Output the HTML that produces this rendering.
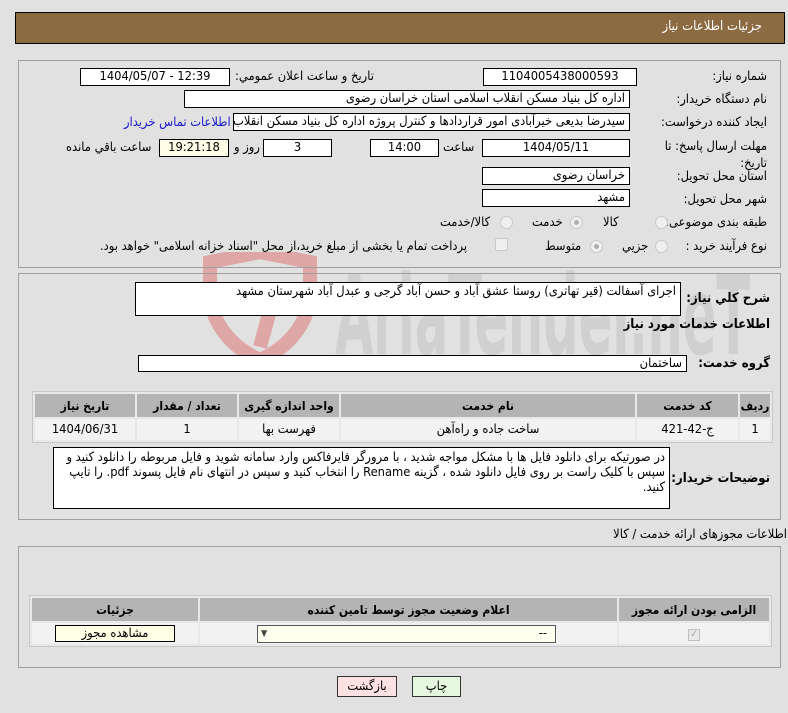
<!DOCTYPE html>
<html><head><meta charset="utf-8">
<style>
*{margin:0;padding:0;box-sizing:border-box}
body{width:788px;height:713px;background:#e1e1e1;position:relative;overflow:hidden;font-family:"DejaVu Sans Condensed","DejaVu Sans","Noto Sans CJK SC",sans-serif;font-size:12.8px;color:#000}
.a{position:absolute}
.box{position:absolute;background:#fff;border:1px solid #000;height:18px;line-height:16px;padding:0 4px;white-space:nowrap;overflow:hidden;direction:rtl}
.c{text-align:center}
.lbl{position:absolute;direction:rtl;white-space:nowrap}
.panel{position:absolute;border:1px solid #a0a0a0}
table{border-collapse:separate;border-spacing:2px;direction:rtl;position:absolute;background:#e8e8e8;border:1px solid #c8c8c8}
th{background:#b4b4b4;font-weight:bold;height:23px;font-size:12px}
td{background:#f2f2f2;height:21px;text-align:center}
.rad{display:inline-block;width:13px;height:13px;border-radius:50%;border:1px solid #c8c8c8;background:#efefef;position:absolute}
.rad.on::after{content:"";position:absolute;left:3px;top:3px;width:5px;height:5px;border-radius:50%;background:#b0b0b0}
.b{font-weight:bold;font-size:13px}
</style></head><body>
<div class="a" style="left:0;top:0;width:788px;height:713px;overflow:hidden">
<div class="a" style="left:200px;top:252px;width:120px;height:110px;opacity:.3">
<svg width="120" height="110" viewBox="0 0 120 110"><path d="M10 10 L60 0 L110 10 L110 50 Q100 90 60 108 Q20 90 10 50 Z" fill="none" stroke="#d22" stroke-width="14"/><path d="M35 40 L75 40 L60 95" fill="none" stroke="#d22" stroke-width="14"/></svg></div>
<div class="a" style="left:335px;top:252px;font-family:'DejaVu Sans Condensed',sans-serif;font-weight:bold;font-size:110px;color:#bcbcbc;opacity:.45;transform:scaleX(.5);transform-origin:left top;white-space:nowrap">AriaTender.neT</div>
</div>

<div class="a" style="left:15px;top:12px;width:770px;height:32px;background:#8c6a42;border:1px solid #000"></div>
<div class="lbl" style="right:26px;top:19px;color:#fff;font-size:13px">جزئیات اطلاعات نیاز</div>

<div class="panel" style="left:18px;top:60px;width:763px;height:208px"></div>
<div class="lbl" style="right:21px;top:69px">شماره نیاز:</div>
<div class="box c" style="left:483px;top:68px;width:154px">1104005438000593</div>
<div class="lbl" style="left:235px;top:69px">تاریخ و ساعت اعلان عمومي:</div>
<div class="box c" style="left:80px;top:68px;width:150px;direction:ltr">1404/05/07 - 12:39</div>

<div class="lbl" style="right:21px;top:92px">نام دستگاه خریدار:</div>
<div class="box" style="left:184px;top:90px;width:446px">اداره کل بنیاد مسکن انقلاب اسلامی استان خراسان رضوی</div>

<div class="lbl" style="right:21px;top:115px">ایجاد کننده درخواست:</div>
<div class="box" style="left:233px;top:113px;width:397px">سیدرضا بدیعی خیرآبادی امور قراردادها و کنترل پروژه اداره کل بنیاد مسکن انقلاب اسلامی</div>
<div class="lbl" style="left:124px;top:115px;color:#1a1acc">اطلاعات تماس خریدار</div>

<div class="lbl" style="right:21px;top:138px;line-height:17px;text-align:right">مهلت ارسال پاسخ: تا<br>تاریخ:</div>
<div class="box c" style="left:482px;top:139px;width:148px">1404/05/11</div>
<div class="lbl" style="left:443px;top:140px">ساعت</div>
<div class="box c" style="left:370px;top:139px;width:69px">14:00</div>
<div class="box c" style="left:263px;top:139px;width:69px">3</div>
<div class="lbl" style="left:234px;top:140px">روز و</div>
<div class="box c" style="left:159px;top:139px;width:70px;background:#fffde6">19:21:18</div>
<div class="lbl" style="left:66px;top:140px">ساعت باقي مانده</div>

<div class="lbl" style="right:21px;top:169px">استان محل تحویل:</div>
<div class="box" style="left:482px;top:167px;width:148px">خراسان رضوی</div>
<div class="lbl" style="right:21px;top:192px">شهر محل تحویل:</div>
<div class="box" style="left:482px;top:189px;width:148px">مشهد</div>

<div class="lbl" style="right:21px;top:215px">طبقه بندی موضوعی:</div>
<span class="rad" style="left:655px;top:216px"></span><div class="lbl" style="left:603px;top:215px">کالا</div>
<span class="rad on" style="left:570px;top:216px"></span><div class="lbl" style="left:532px;top:215px">خدمت</div>
<span class="rad" style="left:500px;top:216px"></span><div class="lbl" style="left:440px;top:215px">کالا/خدمت</div>

<div class="lbl" style="right:21px;top:239px">نوع فرآیند خرید :</div>
<span class="rad" style="left:655px;top:240px"></span><div class="lbl" style="left:622px;top:239px">جزيي</div>
<span class="rad on" style="left:590px;top:240px"></span><div class="lbl" style="left:545px;top:239px">متوسط</div>
<span class="a" style="left:495px;top:238px;width:13px;height:13px;border:1px solid #c8c8c8;background:#efefef;border-radius:2px"></span>
<div class="lbl" style="left:100px;top:239px">پرداخت تمام یا بخشی از مبلغ خرید،از محل "اسناد خزانه اسلامی" خواهد بود.</div>

<div class="panel" style="left:18px;top:273px;width:763px;height:247px"></div>
<div class="lbl b" style="right:18px;top:291px">شرح کلي نیاز:</div>
<div class="box" style="left:135px;top:282px;width:546px;height:34px;padding-top:1px">اجرای آسفالت (قیر تهاتری) روستا عشق آباد و حسن آباد گرجی و عبدل آباد شهرستان مشهد</div>
<div class="lbl b" style="right:18px;top:317px">اطلاعات خدمات مورد نیاز</div>
<div class="lbl b" style="right:18px;top:356px">گروه خدمت:</div>
<div class="box" style="left:138px;top:355px;width:549px;height:17px;line-height:15px">ساختمان</div>

<table style="left:32px;top:391px;width:741px">
<tr><th style="width:30px">ردیف</th><th style="width:101px">کد خدمت</th><th>نام خدمت</th><th style="width:100px">واحد اندازه گیری</th><th style="width:100px">تعداد / مقدار</th><th style="width:100px">تاریخ نیاز</th></tr>
<tr><td>1</td><td>ج-42-421</td><td>ساخت جاده و راه‌آهن</td><td>فهرست بها</td><td>1</td><td>1404/06/31</td></tr>
</table>

<div class="lbl b" style="right:18px;top:471px">توضیحات خریدار:</div>
<div class="box" style="left:53px;top:447px;width:617px;height:62px;white-space:normal;line-height:15px;padding-top:2px">در صورتیکه برای دانلود فایل ها با مشکل مواجه شدید ، با مرورگر فایرفاکس وارد سامانه شوید و فایل مربوطه را دانلود کنید و سپس با کلیک راست بر روی فایل دانلود شده ، گزینه Rename را انتخاب کنید و سپس در انتهای نام فایل پسوند pdf. را تایپ کنید.</div>

<div class="lbl" style="right:1px;top:527px">اطلاعات مجوزهای ارائه خدمت / کالا</div>
<div class="panel" style="left:18px;top:546px;width:763px;height:122px"></div>
<table style="left:29px;top:595px;width:743px">
<tr><th style="width:150px">الزامی بودن ارائه مجوز</th><th>اعلام وضعیت مجوز توسط تامین کننده</th><th style="width:166px">جزئیات</th></tr>
<tr><td><span style="display:inline-block;width:12px;height:12px;border:1px solid #c0c0c0;background:#e8e8e8;color:#aaa;font-size:10px;line-height:10px">✓</span></td>
<td><div style="margin:0 auto 0 57px;width:299px;height:18px;border:1px solid #555;background:#fffff0;position:relative;text-align:right;padding-right:8px;line-height:16px">--<span style="position:absolute;left:3px;top:0;font-size:9px;color:#444">▼</span></div></td>
<td><div style="margin:0 auto;width:120px;height:17px;border:1px solid #000;background:#ffffe6;line-height:15px">مشاهده مجوز</div></td></tr>
</table>

<div class="a c" style="left:412px;top:676px;width:49px;height:21px;border:1px solid #333;background:#e6f8df;line-height:19px">چاپ</div>
<div class="a c" style="left:337px;top:676px;width:60px;height:21px;border:1px solid #333;background:#fde0e0;line-height:19px">بازگشت</div>
</body></html>
